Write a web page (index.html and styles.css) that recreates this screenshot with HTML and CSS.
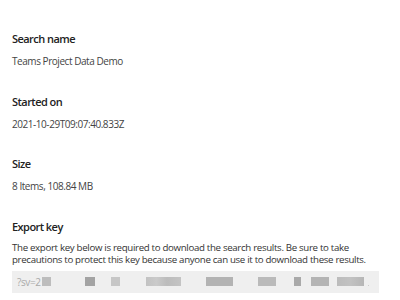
FILE: index.html
```html
<!DOCTYPE html>
<html>
<head>
<meta charset="utf-8">
<link rel="stylesheet" href="styles.css">
</head>
<body>
<div class="page">
  <section class="field">
    <h3 class="label">Search name</h3>
    <p class="value">Teams Project Data Demo</p>
  </section>
  <section class="field">
    <h3 class="label">Started on</h3>
    <p class="value">2021-10-29T09:07:40.833Z</p>
  </section>
  <section class="field">
    <h3 class="label">Size</h3>
    <p class="value">8 Items, 108.84 MB</p>
  </section>
  <section class="field last">
    <h3 class="label">Export key</h3>
    <p class="desc">The export key below is required to download the search results. Be sure to take<br>precautions to protect this key because anyone can use it to download these results.</p>
    <div class="key">
      <span class="key-text">?sv=2</span>
      <span class="blk b1"></span>
      <span class="blk b2"></span>
      <span class="blk b3"></span>
      <span class="blk b4"></span>
      <span class="blk b5"></span>
      <span class="blk b6"></span>
      <span class="blk b7"></span>
      <span class="blk b8"></span>
      <span class="blk b9"></span>
      <span class="dot"></span>
    </div>
  </section>
</div>
</body>
</html>
```
FILE: styles.css
```css
html, body {
  margin: 0;
  padding: 0;
  background: #ffffff;
}
body {
  font-family: "Open Sans", "Noto Sans", sans-serif;
  color: #333;
}
.page {
  padding: 31px 0 0 12px;
}
.field {
  margin-bottom: 24.5px;
}
.field.last {
  margin-bottom: 0;
}
.label {
  margin: 0 0 7px 0;
  font-size: 11px;
  line-height: 16px;
  font-weight: 600;
  letter-spacing: -0.55px;
  color: #222;
}
.value {
  margin: 0;
  font-size: 10px;
  line-height: 15px;
  letter-spacing: -0.45px;
  color: #444;
}
.desc {
  margin: 0;
  font-size: 9.7px;
  line-height: 12px;
  letter-spacing: -0.32px;
  white-space: nowrap;
  color: #333;
}
.key {
  margin-top: 5px;
  width: 367px;
  height: 22px;
  background: #efefef;
  display: flex;
  align-items: center;
  padding-left: 5px;
  box-sizing: border-box;
}
.key-text {
  font-size: 10px;
  letter-spacing: -0.4px;
  color: #aaa;
  line-height: 22px;
}
.blk {
  display: block;
  height: 9px;
  flex: none;
}
.b1 { width: 9px; margin-left: 1px; background: #bdbdbd; }
.b2 { width: 10px; margin-left: 34px; background: #a3a3a3; }
.b3 { width: 9px; margin-left: 16px; background: #c6c6c6; }
.b4 { width: 35px; margin-left: 26px; background: linear-gradient(90deg, #c2c2c2, #cacaca 30%, #bcbcbc 60%, #c4c4c4); }
.b5 { width: 27px; margin-left: 25px; background: #b3b3b3; }
.b6 { width: 18px; margin-left: 25px; background: #bababa; }
.b7 { width: 7px; margin-left: 18px; background: #a9a9a9; }
.b8 { width: 18px; margin-left: 10px; background: #b4b4b4; }
.b9 { width: 27px; margin-left: 8px; background: linear-gradient(90deg, #bcbcbc, #c2c2c2 50%, #b6b6b6); }
.dot { display: block; width: 1px; height: 1px; margin-left: 4px; margin-top: 7px; background: #ccc; }
```
